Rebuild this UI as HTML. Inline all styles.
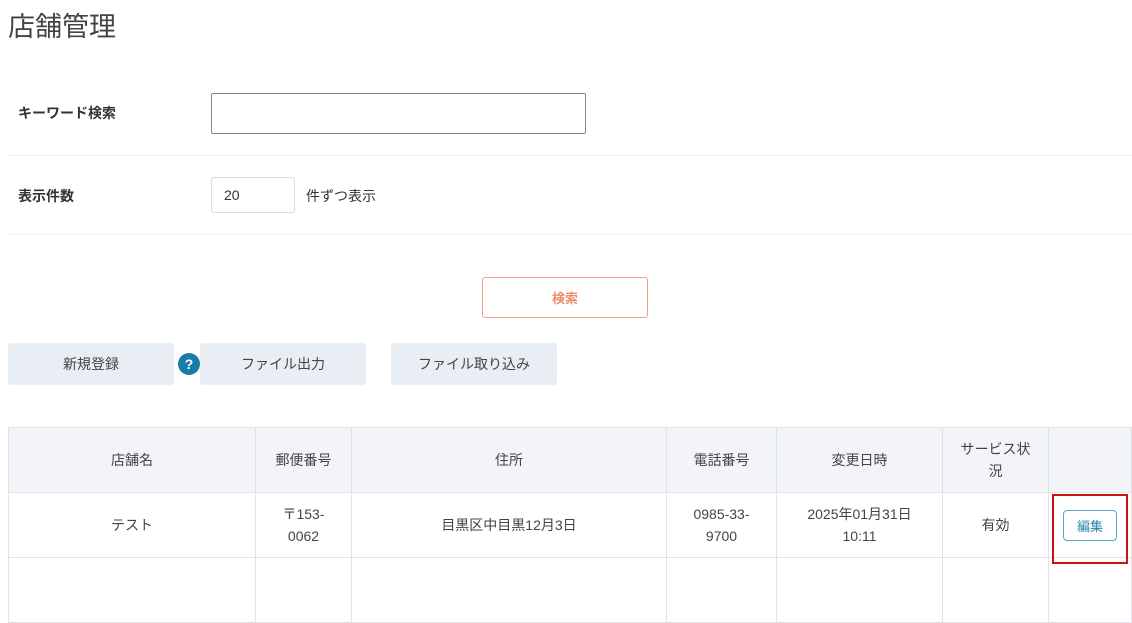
<!DOCTYPE html>
<html><head><meta charset="utf-8"><style>
*{box-sizing:border-box;margin:0;padding:0}
body{width:1132px;height:567px;overflow:hidden;background:#fff;font-family:"Liberation Sans","Noto Sans CJK JP",sans-serif;color:#333;position:relative}
.a{position:absolute}
h1{position:absolute;left:8px;top:5px;font-size:27px;font-weight:normal;color:#444}
.lbl{font-size:14px;font-weight:bold;color:#333}
.sep{left:8px;right:0;height:1px;background:#eef0f4}
.btn{position:absolute;top:343px;height:42px;width:166px;background:#e9edf4;border-radius:3px;font-size:14px;color:#444;display:flex;align-items:center;justify-content:center}
table{position:absolute;left:8px;top:427px;width:1124px;border-collapse:collapse;font-size:14px;color:#444}
td,th{border:1px solid #dde3ec;text-align:center;font-weight:normal;line-height:22px}
th{background:#f2f4f8;height:65px}
td{height:65px}
</style></head><body>
<h1>店舗管理</h1>
<div class="a lbl" style="left:18px;top:103px">キーワード検索</div>
<div class="a" style="left:211px;top:93px;width:375px;height:41px;border:1px solid #888;border-radius:2px"></div>
<div class="a sep" style="top:155px"></div>
<div class="a lbl" style="left:18px;top:186px">表示件数</div>
<div class="a" style="left:211px;top:177px;width:84px;height:36px;border:1px solid #ddd;border-radius:3px;font-size:14px;padding:9px 0 0 12px">20</div>
<div class="a" style="left:306px;top:186px;font-size:14px">件ずつ表示</div>
<div class="a sep" style="top:234px"></div>
<div class="a" style="left:482px;top:277px;width:166px;height:41px;border:1px solid #f3a08a;border-radius:3px;color:#f08a6c;font-weight:bold;font-size:13px;display:flex;align-items:center;justify-content:center">検索</div>
<div class="btn" style="left:8px">新規登録</div>
<div class="a" style="left:178px;top:353px;width:22px;height:22px;border-radius:50%;background:#1a7ca8;color:#fff;font-weight:bold;font-size:14px;text-align:center;line-height:22px">?</div>
<div class="btn" style="left:200px">ファイル出力</div>
<div class="btn" style="left:391px">ファイル取り込み</div>
<table>
<tr><th style="width:247px">店舗名</th><th style="width:96px">郵便番号</th><th style="width:315px">住所</th><th style="width:110px">電話番号</th><th style="width:166px">変更日時</th><th style="width:106px">サービス状<br>況</th><th></th></tr>
<tr><td>テスト</td><td>〒153-<br>0062</td><td>目黒区中目黒12月3日</td><td>0985-33-<br>9700</td><td>2025年01月31日<br>10:11</td><td>有効</td><td></td></tr>
<tr><td></td><td></td><td></td><td></td><td></td><td></td><td></td></tr>
</table>
<div class="a" style="left:1052px;top:494px;width:76px;height:70px;border:2px solid #d01010"></div>
<div class="a" style="left:1063px;top:510px;width:54px;height:31px;border:1px solid #5aa8c8;border-radius:4px;color:#2a86ad;font-size:13px;display:flex;align-items:center;justify-content:center">編集</div>
</body></html>
